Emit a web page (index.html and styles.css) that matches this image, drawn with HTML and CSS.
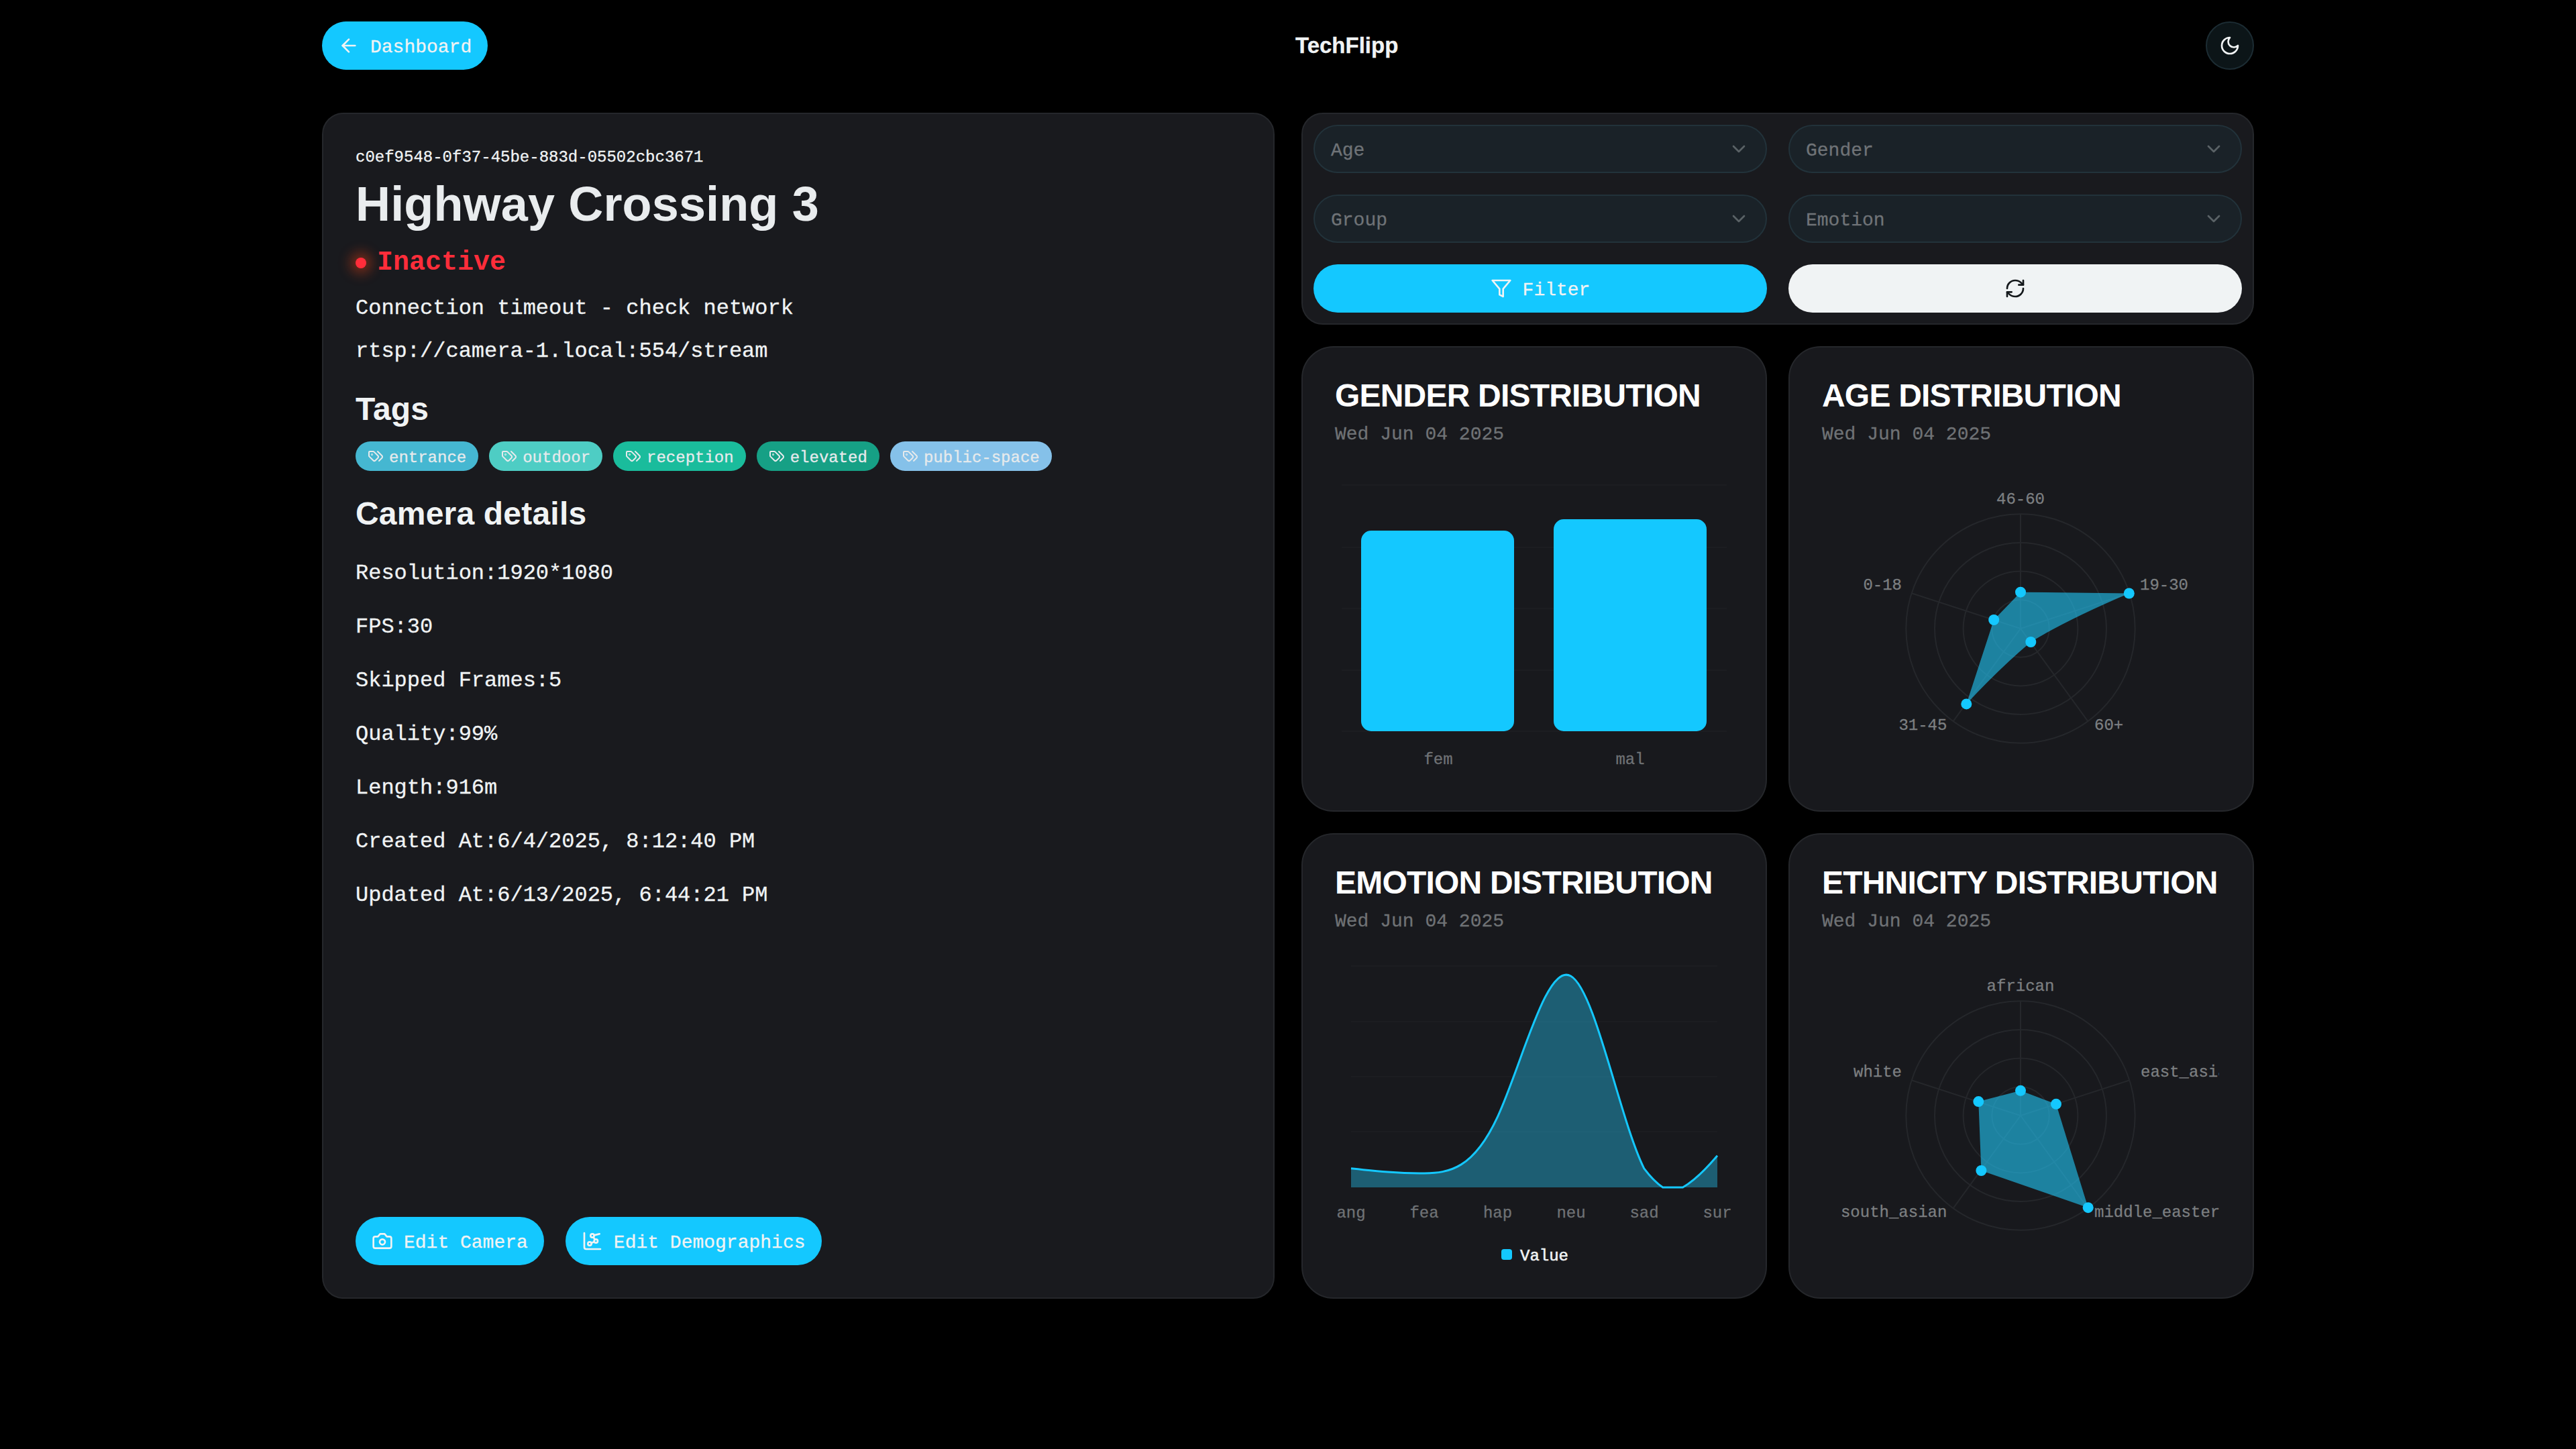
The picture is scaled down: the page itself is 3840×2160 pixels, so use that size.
FILE: index.html
```html
<!DOCTYPE html>
<html>
<head>
    <title>TechFlipp</title>
    <link rel="stylesheet" href="styles.css">
</head>
<body>
    <div class="page">
        <header class="topbar">
            <button class="btn">
                <svg class="icon" viewBox="0 0 24 24"><path d="m12 19-7-7 7-7"/><path d="M19 12H5"/></svg>
                <span class="label">Dashboard</span>
            </button>
            <div class="brand">TechFlipp</div>
            <button class="theme-btn">
                <svg class="icon" viewBox="0 0 24 24"><path d="M12 3a6 6 0 0 0 9 9 9 9 0 1 1-9-9Z"/></svg>
            </button>
        </header>

        <main class="layout">
            <section class="camera-card">
                <div class="camera-id">c0ef9548-0f37-45be-883d-05502cbc3671</div>
                <h1 class="camera-name">Highway Crossing 3</h1>
                <div class="status"><span class="status-dot"></span>Inactive</div>
                <p class="status-msg">Connection timeout - check network</p>
                <p class="stream-url">rtsp://camera-1.local:554/stream</p>

                <h2 class="section-title tags-title">Tags</h2>
                <div class="tags">
                    <span class="tag tag-entrance"><svg class="icon" viewBox="0 0 24 24"><path d="m15 5 6.3 6.3a2.4 2.4 0 0 1 0 3.4L17 19"/><path d="M9.586 5.586A2 2 0 0 0 8.172 5H3a1 1 0 0 0-1 1v5.172a2 2 0 0 0 .586 1.414L8.29 18.29a2.426 2.426 0 0 0 3.42 0l3.58-3.58a2.426 2.426 0 0 0 0-3.42z"/><circle cx="6.5" cy="9.5" r=".5"/></svg><span class="label">entrance</span></span>
                    <span class="tag tag-outdoor"><svg class="icon" viewBox="0 0 24 24"><path d="m15 5 6.3 6.3a2.4 2.4 0 0 1 0 3.4L17 19"/><path d="M9.586 5.586A2 2 0 0 0 8.172 5H3a1 1 0 0 0-1 1v5.172a2 2 0 0 0 .586 1.414L8.29 18.29a2.426 2.426 0 0 0 3.42 0l3.58-3.58a2.426 2.426 0 0 0 0-3.42z"/><circle cx="6.5" cy="9.5" r=".5"/></svg><span class="label">outdoor</span></span>
                    <span class="tag tag-reception"><svg class="icon" viewBox="0 0 24 24"><path d="m15 5 6.3 6.3a2.4 2.4 0 0 1 0 3.4L17 19"/><path d="M9.586 5.586A2 2 0 0 0 8.172 5H3a1 1 0 0 0-1 1v5.172a2 2 0 0 0 .586 1.414L8.29 18.29a2.426 2.426 0 0 0 3.42 0l3.58-3.58a2.426 2.426 0 0 0 0-3.42z"/><circle cx="6.5" cy="9.5" r=".5"/></svg><span class="label">reception</span></span>
                    <span class="tag tag-elevated"><svg class="icon" viewBox="0 0 24 24"><path d="m15 5 6.3 6.3a2.4 2.4 0 0 1 0 3.4L17 19"/><path d="M9.586 5.586A2 2 0 0 0 8.172 5H3a1 1 0 0 0-1 1v5.172a2 2 0 0 0 .586 1.414L8.29 18.29a2.426 2.426 0 0 0 3.42 0l3.58-3.58a2.426 2.426 0 0 0 0-3.42z"/><circle cx="6.5" cy="9.5" r=".5"/></svg><span class="label">elevated</span></span>
                    <span class="tag tag-public"><svg class="icon" viewBox="0 0 24 24"><path d="m15 5 6.3 6.3a2.4 2.4 0 0 1 0 3.4L17 19"/><path d="M9.586 5.586A2 2 0 0 0 8.172 5H3a1 1 0 0 0-1 1v5.172a2 2 0 0 0 .586 1.414L8.29 18.29a2.426 2.426 0 0 0 3.42 0l3.58-3.58a2.426 2.426 0 0 0 0-3.42z"/><circle cx="6.5" cy="9.5" r=".5"/></svg><span class="label">public-space</span></span>
                </div>

                <h2 class="section-title details-title">Camera details</h2>
                <ul class="details">
                    <li>Resolution:1920*1080</li>
                    <li>FPS:30</li>
                    <li>Skipped Frames:5</li>
                    <li>Quality:99%</li>
                    <li>Length:916m</li>
                    <li>Created At:6/4/2025, 8:12:40 PM</li>
                    <li>Updated At:6/13/2025, 6:44:21 PM</li>
                </ul>

                <div class="camera-actions">
                    <button class="btn">
                        <svg class="icon" viewBox="0 0 24 24"><path d="M14.5 4h-5L7 7H4a2 2 0 0 0-2 2v9a2 2 0 0 0 2 2h16a2 2 0 0 0 2-2V9a2 2 0 0 0-2-2h-3l-2.5-3z"/><circle cx="12" cy="13" r="3"/></svg>
                        <span class="label">Edit Camera</span>
                    </button>
                    <button class="btn">
                        <svg class="icon" viewBox="0 0 24 24"><path d="m13.11 7.664 1.78 2.672"/><path d="m14.162 12.788-3.324 1.424"/><path d="m20 4-6.06 1.515"/><path d="M3 3v16a2 2 0 0 0 2 2h16"/><circle cx="12" cy="6" r="2"/><circle cx="16" cy="12" r="2"/><circle cx="9" cy="15" r="2"/></svg>
                        <span class="label">Edit Demographics</span>
                    </button>
                </div>
            </section>

            <section class="insights">
                <div class="filters">
                    <div class="select"><span class="label">Age</span><svg class="icon" viewBox="0 0 24 24"><path d="m6 9 6 6 6-6"/></svg></div>
                    <div class="select"><span class="label">Gender</span><svg class="icon" viewBox="0 0 24 24"><path d="m6 9 6 6 6-6"/></svg></div>
                    <div class="select"><span class="label">Group</span><svg class="icon" viewBox="0 0 24 24"><path d="m6 9 6 6 6-6"/></svg></div>
                    <div class="select"><span class="label">Emotion</span><svg class="icon" viewBox="0 0 24 24"><path d="m6 9 6 6 6-6"/></svg></div>
                    <button class="btn btn-wide">
                        <svg class="icon" viewBox="0 0 24 24"><polygon points="22 3 2 3 10 12.46 10 19 14 21 14 12.46 22 3"/></svg>
                        <span class="label">Filter</span>
                    </button>
                    <button class="btn btn-wide btn-light">
                        <svg class="icon" viewBox="0 0 24 24"><path d="M3 12a9 9 0 0 1 9-9 9.75 9.75 0 0 1 6.74 2.74L21 8"/><path d="M21 3v5h-5"/><path d="M21 12a9 9 0 0 1-9 9 9.75 9.75 0 0 1-6.74-2.74L3 16"/><path d="M8 16H3v5"/></svg>
                    </button>
                </div>

                <div class="charts">
                    <article class="chart-card">
                        <h3 class="chart-title">GENDER DISTRIBUTION</h3>
                        <div class="chart-date">Wed Jun 04 2025</div>
                        <svg class="chart" viewBox="0 0 592 486">
                            <g class="grid grid-faint">
                                <line x1="10" y1="49" x2="584" y2="49"/>
                                <line x1="10" y1="142" x2="584" y2="142"/>
                                <line x1="10" y1="233" x2="584" y2="233"/>
                                <line x1="10" y1="325" x2="584" y2="325"/>
                                <line x1="10" y1="416" x2="584" y2="416"/>
                            </g>
                            <rect class="bar" x="39" y="117" width="228" height="299" rx="15"/>
                            <rect class="bar" x="326" y="100" width="228" height="316" rx="15"/>
                            <text class="axis-label" x="154" y="458">fem</text>
                            <text class="axis-label" x="440" y="458">mal</text>
                        </svg>
                    </article>

                    <article class="chart-card">
                        <h3 class="chart-title">AGE DISTRIBUTION</h3>
                        <div class="chart-date">Wed Jun 04 2025</div>
                        <svg class="chart" viewBox="0 0 592 486">
                            <g class="grid">
                                <circle cx="296" cy="263" r="42.7"/>
                                <circle cx="296" cy="263" r="85.4"/>
                                <circle cx="296" cy="263" r="128"/>
                                <circle cx="296" cy="263" r="170.7"/>
                                <line x1="296" y1="263" x2="296" y2="92"/>
                                <line x1="296" y1="263" x2="458.6" y2="210.2"/>
                                <line x1="296" y1="263" x2="396.5" y2="401.3"/>
                                <line x1="296" y1="263" x2="195.5" y2="401.3"/>
                                <line x1="296" y1="263" x2="133.4" y2="210.2"/>
                            </g>
                            <path class="radar-area" d="M296 208.7 L457.8 210.5 Q365 250 311.3 283 Q265 322 215.3 375.4 L256.2 250 Z"/>
                            <g class="radar-dots">
                                <circle cx="296" cy="208.7" r="8"/>
                                <circle cx="457.8" cy="210.5" r="8"/>
                                <circle cx="311.3" cy="283" r="8"/>
                                <circle cx="215.3" cy="375.4" r="8"/>
                                <circle cx="256.2" cy="250" r="8"/>
                            </g>
                            <text class="radar-label" x="296" y="70">46-60</text>
                            <text class="radar-label start" x="474" y="198">19-30</text>
                            <text class="radar-label start" x="406" y="407">60+</text>
                            <text class="radar-label end" x="186.4" y="407">31-45</text>
                            <text class="radar-label end" x="119" y="198">0-18</text>
                        </svg>
                    </article>

                    <article class="chart-card">
                        <h3 class="chart-title">EMOTION DISTRIBUTION</h3>
                        <div class="chart-date">Wed Jun 04 2025</div>
                        <svg class="chart" viewBox="0 0 592 486">
                            <g class="grid grid-faint">
                                <line x1="24" y1="40" x2="570" y2="40"/>
                                <line x1="24" y1="123" x2="570" y2="123"/>
                                <line x1="24" y1="205" x2="570" y2="205"/>
                                <line x1="24" y1="287" x2="570" y2="287"/>
                            </g>
                            <path class="area-fill" d="M24 341.8 C60.4 345.7 96.8 349.6 133.2 349 C169.6 348.4 206 343.3 242.4 264.8 C278.8 186.3 315.2 34.5 351.6 55 C388 75.5 424.4 268.4 460.8 341.8 C470 354 480 364 488.7 370 L518.5 370 C534 361 552 344 570 322.8 L570 370 L24 370 Z"/>
                            <path class="area-line" d="M24 341.8 C60.4 345.7 96.8 349.6 133.2 349 C169.6 348.4 206 343.3 242.4 264.8 C278.8 186.3 315.2 34.5 351.6 55 C388 75.5 424.4 268.4 460.8 341.8 C470 354 480 364 488.7 370 L518.5 370 C534 361 552 344 570 322.8"/>
                            <text class="axis-label" x="24" y="408">ang</text>
                            <text class="axis-label" x="133" y="408">fea</text>
                            <text class="axis-label" x="242.5" y="408">hap</text>
                            <text class="axis-label" x="352" y="408">neu</text>
                            <text class="axis-label" x="461" y="408">sad</text>
                            <text class="axis-label" x="570" y="408">sur</text>
                            <rect class="bar" x="248" y="462" width="16" height="16" rx="4"/>
                            <text class="legend-label" x="276" y="472">Value</text>
                        </svg>
                    </article>

                    <article class="chart-card">
                        <h3 class="chart-title">ETHNICITY DISTRIBUTION</h3>
                        <div class="chart-date">Wed Jun 04 2025</div>
                        <svg class="chart" viewBox="0 0 592 486">
                            <g class="grid">
                                <circle cx="296" cy="263" r="42.7"/>
                                <circle cx="296" cy="263" r="85.4"/>
                                <circle cx="296" cy="263" r="128"/>
                                <circle cx="296" cy="263" r="170.7"/>
                                <line x1="296" y1="263" x2="296" y2="92"/>
                                <line x1="296" y1="263" x2="458.6" y2="210.2"/>
                                <line x1="296" y1="263" x2="396.5" y2="401.3"/>
                                <line x1="296" y1="263" x2="195.5" y2="401.3"/>
                                <line x1="296" y1="263" x2="133.4" y2="210.2"/>
                            </g>
                            <polygon class="radar-area" points="296,225.8 349,245.8 396.7,400.2 237.4,345 233.3,242.1"/>
                            <g class="radar-dots">
                                <circle cx="296" cy="225.8" r="8"/>
                                <circle cx="349" cy="245.8" r="8"/>
                                <circle cx="396.7" cy="400.2" r="8"/>
                                <circle cx="237.4" cy="345" r="8"/>
                                <circle cx="233.3" cy="242.1" r="8"/>
                            </g>
                            <text class="radar-label" x="296" y="70">african</text>
                            <text class="radar-label start" x="475" y="198">east_asian</text>
                            <text class="radar-label start" x="406" y="407">middle_eastern</text>
                            <text class="radar-label end" x="186.4" y="407">south_asian</text>
                            <text class="radar-label end" x="119" y="198">white</text>
                        </svg>
                    </article>
                </div>
            </section>
        </main>
    </div>
</body>
</html>
```
FILE: styles.css
```css
* {
  box-sizing: border-box;
}

body {
  margin: 0;
  background-color: #000;
  color: #f0f3f4;
  font-family: "Liberation Mono", monospace;
  -webkit-text-stroke: 0.3px currentColor;
}

h1, h2, h3, p, ul {
  margin: 0;
  padding: 0;
}

.page {
  width: 2880px;
  margin: 0 auto;
  padding-top: 32px;
}

.topbar {
  display: flex;
  justify-content: space-between;
  align-items: center;
  margin-bottom: 64px;
}

.brand {
  font-family: "Liberation Sans", sans-serif;
  font-weight: 700;
  font-size: 33px;
  line-height: 40px;
}

.icon {
  width: 32px;
  height: 32px;
  flex: none;
  fill: none;
  stroke: currentColor;
  stroke-width: 2;
  stroke-linecap: round;
  stroke-linejoin: round;
}

/* the mono font sits a bit high next to the icons */
.label {
  margin-top: 4px;
}

.btn {
  display: inline-flex;
  align-items: center;
  justify-content: center;
  gap: 16px;
  height: 72px;
  padding: 0 24px;
  border: 0;
  border-radius: 36px;
  background-color: #14c8ff;
  color: #f0f3f4;
  font-family: inherit;
  font-size: 28px;
}

.btn-light {
  background-color: #f0f3f4;
  color: #14181b;
}

.theme-btn {
  display: flex;
  align-items: center;
  justify-content: center;
  width: 72px;
  height: 72px;
  padding: 0;
  border: 2px solid #1c2c33;
  border-radius: 50%;
  background-color: #0c1518;
  color: #f0f3f4;
}

.layout {
  display: grid;
  grid-template-columns: 1fr 1fr;
  gap: 40px;
}

.camera-card {
  display: flex;
  flex-direction: column;
  padding: 48px;
  border: 2px solid #25272b;
  border-radius: 32px;
  background-color: #191a1e;
}

.camera-id {
  padding-top: 1px;
  font-size: 24px;
  line-height: 32px;
}

.camera-name {
  margin-top: 13px;
  font-family: "Liberation Sans", sans-serif;
  font-size: 72px;
  line-height: 80px;
  font-weight: 700;
  letter-spacing: 0.15px;
  color: #e9ecee;
  -webkit-text-stroke: 0;
}

.status {
  display: flex;
  align-items: center;
  gap: 16px;
  margin-top: 20px;
  font-size: 40px;
  line-height: 56px;
  font-weight: 700;
  color: #ff2d3a;
  -webkit-text-stroke: 0;
}

.status-dot {
  width: 16px;
  height: 16px;
  border-radius: 50%;
  background-color: #ff2d3a;
  box-shadow: 0 0 18px 8px rgba(255, 70, 20, 0.4);
}

.status-msg,
.stream-url {
  font-size: 32px;
  line-height: 48px;
  margin-top: 16px;
}

.section-title {
  font-family: "Liberation Sans", sans-serif;
  font-size: 48px;
  line-height: 64px;
  font-weight: 700;
  letter-spacing: 0.2px;
  -webkit-text-stroke: 0;
}

.tags-title {
  margin-top: 30px;
}

.tags {
  display: flex;
  gap: 16px;
  margin-top: 16px;
}

.tag {
  display: inline-flex;
  align-items: center;
  gap: 8px;
  height: 44px;
  padding: 0 18px;
  border-radius: 22px;
  font-size: 24px;
  color: #e6eaec;
}

.tag-entrance { background-color: #45b7d1; }
.tag-outdoor { background-color: #4ecdc4; }
.tag-reception { background-color: #1abc9c; }
.tag-elevated { background-color: #16a085; }
.tag-public { background-color: #85c1e9; }

.tag .icon {
  width: 24px;
  height: 24px;
}

.details-title {
  margin-top: 32px;
}

.details {
  display: flex;
  flex-direction: column;
  gap: 32px;
  margin-top: 33px;
  list-style: none;
  font-size: 32px;
  line-height: 48px;
}

.camera-actions {
  display: flex;
  gap: 32px;
  margin-top: auto;
}

.insights {
  display: flex;
  flex-direction: column;
  gap: 32px;
}

.filters {
  display: grid;
  grid-template-columns: 1fr 1fr;
  gap: 32px;
  padding: 16px;
  border: 2px solid #25272b;
  border-radius: 32px;
  background-color: #191a1e;
}

.select {
  display: flex;
  align-items: center;
  justify-content: space-between;
  height: 72px;
  padding: 0 24px;
  border: 2px solid #22323a;
  border-radius: 36px;
  background-color: #1a2228;
  font-size: 28px;
  color: #6f7377;
}

.select .icon {
  color: #5a6266;
}

.btn-wide {
  width: 100%;
}

.charts {
  display: grid;
  grid-template-columns: 1fr 1fr;
  gap: 32px;
}

.chart-card {
  display: flex;
  flex-direction: column;
  aspect-ratio: 1;
  padding: 48px;
  border: 2px solid #25272b;
  border-radius: 48px;
  background-color: #18191d;
}

.chart-title {
  font-family: "Liberation Sans", sans-serif;
  font-size: 48px;
  line-height: 48px;
  font-weight: 700;
  letter-spacing: -0.8px;
  color: #fff;
  white-space: nowrap;
  -webkit-text-stroke: 0;
}

.chart-date {
  margin-top: 14px;
  margin-bottom: 6px;
  font-size: 28px;
  line-height: 40px;
  color: #6f7275;
}

.chart {
  display: block;
  width: 592px;
  height: 486px;
}

.grid line,
.grid circle {
  fill: none;
  stroke: #25272b;
  stroke-width: 2;
}

.grid-faint line {
  stroke: #1c1d21;
}

.bar {
  fill: #14c8ff;
}

.axis-label,
.radar-label,
.legend-label {
  font-size: 24px;
  dominant-baseline: central;
  text-anchor: middle;
  fill: #6f7275;
  stroke: #6f7275;
  stroke-width: 0.3;
}

.radar-label {
  fill: #7c7f81;
  stroke: #7c7f81;
}

.radar-label.start,
.legend-label {
  text-anchor: start;
}

.radar-label.end {
  text-anchor: end;
}

.legend-label {
  fill: #f0f3f4;
  stroke: #f0f3f4;
  stroke-width: 0.6;
}

.radar-area {
  fill: #22c8f8;
  fill-opacity: 0.6;
}

.radar-dots circle {
  fill: #14c8ff;
}

.area-fill {
  fill: #26c6f5;
  fill-opacity: 0.4;
}

.area-line {
  fill: none;
  stroke: #14c8ff;
  stroke-width: 3;
}
```
